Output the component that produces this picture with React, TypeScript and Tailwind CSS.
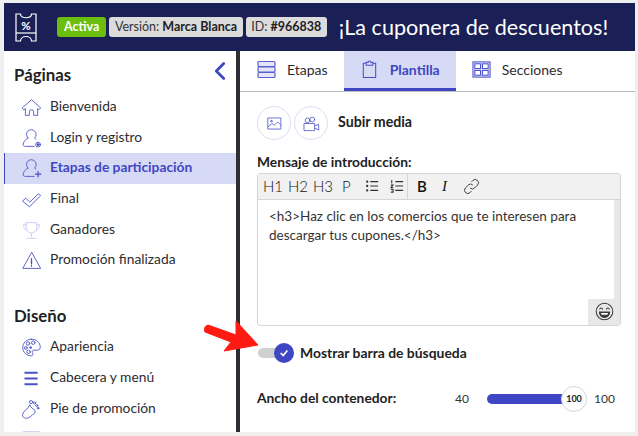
import { ChevronLeft } from 'lucide-react';

const FONT = "font-['Lato','Noto_Sans',sans-serif]";

function Icon({ children, className = '' }: { children: React.ReactNode; className?: string }) {
  return (
    <svg viewBox="0 0 24 24" fill="none" stroke="#4a50c8" strokeWidth="1" strokeLinecap="round" strokeLinejoin="round" className={className}>
      {children}
    </svg>
  );
}

const paginas = [
  {
    label: 'Bienvenida',
    icon: <path d="M1.500 12.500 12 3l10.500 9.500-2 2-1.500-1.300V21h-4.500v-4a2.500 2.500 0 0 0-5 0v4H5v-7.800l-1.500 1.300z" />,
  },
  {
    label: 'Login y registro',
    icon: (
      <>
        <path d="M8 11.500a5.500 5.500 0 1 1 7.500 0c.5.500 1 .8 1.500 1M8 11.500C5 13 2.500 16 2.500 19c0 1.500 1 2 2.500 2h10" />
        <circle cx="19.500" cy="19" r="2.800" />
        <circle cx="19.500" cy="19" r="1.200" fill="#4a50c8" />
      </>
    ),
  },
  {
    label: 'Etapas de participación',
    active: true,
    icon: (
      <>
        <path d="M8 11.500a5.500 5.500 0 1 1 7.500 0c.5.500 1 .8 1.500 1M8 11.500C5 13 2.500 16 2.500 19c0 1.500 1 2 2.500 2h10" />
        <path d="M19.500 15.500v6M16.500 18.500h6" strokeWidth="1.500" />
      </>
    ),
  },
  {
    label: 'Final',
    icon: <path d="m2 13.500 3.500-3 4.500 4.500 10-9.500 2.500 2L10 20z" />,
  },
  {
    label: 'Ganadores',
    faded: true,
    icon: (
      <>
        <path d="M6 3h12v6a6 6 0 0 1-12 0z" />
        <path d="M6 5H3c0 4 1 6 4 7M18 5h3c0 4-1 6-4 7M12 15v4M7 21h10" />
      </>
    ),
  },
  {
    label: 'Promoción finalizada',
    icon: (
      <>
        <path d="M12 3 2 21h20z" />
        <path d="M12 10v6M12 18v.5" strokeWidth="1.500" />
      </>
    ),
  },
];

const diseno = [
  {
    label: 'Apariencia',
    icon: (
      <>
        <path d="M12 2.500C6 2.500 2 7 2 12c0 5.500 4.500 9.500 9 9.500 3 0 3-2 2-3.500-.8-1.500 0-3 2-3h4c2 0 3-1.500 3-3.500 0-5-4.500-9-10-9z" />
        <circle cx="8" cy="7.500" r="2" />
        <circle cx="14" cy="6.500" r="2" />
        <circle cx="5.500" cy="12.500" r="1.600" />
        <circle cx="8.500" cy="17" r="2" />
        <circle cx="11" cy="12" r="1" fill="#4a50c8" />
      </>
    ),
  },
  {
    label: 'Cabecera y menú',
    icon: <path d="M4 5.500h15M4 12h15M4 18.500h15" strokeWidth="2.200" strokeLinecap="butt" />,
  },
  {
    label: 'Pie de promoción',
    icon: (
      <>
        <path d="M10 7c1 3 4 4 6 6 1 3-1 4-3 5-2 2-4 4-7 4-3 0-5-2-4-5 1-4 6-5 8-10z" />
        <circle cx="11.500" cy="3.500" r="1.800" />
        <circle cx="15.500" cy="4.500" r="1.300" />
        <circle cx="18" cy="7.500" r="1.200" />
        <circle cx="19.500" cy="10.500" r="1" />
      </>
    ),
  },
  {
    label: '',
    faded: true,
    icon: <rect x="3" y="3" width="18" height="18" />,
  },
];

function NavRow({ label, icon, active, faded }: { label: string; icon: React.ReactNode; active?: boolean; faded?: boolean }) {
  return (
    <div className={`flex h-[30.700px] items-center border-l-[1px] pl-[16px] ${active ? 'border-[#3f46c4] bg-[#d6daf5]' : 'border-transparent'}`}>
      <Icon className={`h-[21px] w-[21px] ${faded ? 'opacity-30' : ''}`}>{icon}</Icon>
      <span className={`-mt-[2px] ml-[8px] text-[13.800px] ${active ? 'font-bold text-[#3f46c4]' : 'text-[#2c2c30]'}`}>{label}</span>
    </div>
  );
}

function Tab({ label, icon, active }: { label: string; icon: React.ReactNode; active?: boolean }) {
  return (
    <div className={`flex h-[40px] items-center gap-[11px] border-b-[3px] px-[16px] text-[14px] ${active ? 'border-[#3f46c4] bg-[#d6daf5] font-bold text-[#3f46c4]' : 'border-transparent text-[#2c2c30]'}`}>
      {icon}
      <span>{label}</span>
    </div>
  );
}

function MediaButton({ children }: { children: React.ReactNode }) {
  return (
    <div className="flex h-[34px] w-[34px] items-center justify-center rounded-full border border-[#dcdef2]">
      <Icon className="h-[19px] w-[19px]">{children}</Icon>
    </div>
  );
}

function Tool({ children, className = '' }: { children: React.ReactNode; className?: string }) {
  return <span className={`text-[15px] leading-none whitespace-nowrap text-[#111] ${className}`}>{children}</span>;
}

export default function App() {
  return (
    <div className={`${FONT} relative h-[436px] w-[638px] overflow-hidden bg-[#efefef] pb-[4px] pl-[4px] pr-[3px] pt-[3px]`}>
      <div className="flex h-full flex-col">
        <header className="flex h-[48px] shrink-0 items-center bg-[#1a1f55]">
          <svg viewBox="0 0 22 29" fill="none" stroke="white" strokeWidth="1.200" className="ml-[11px] h-[29px] w-[22px]">
            <path d="M1 1h4.500c0 5 11 5 11 0H21v27h-4.500c0-6-11-6-11 0H1z" />
            <path d="M1 20h20" />
            <text x="11" y="16.500" fontSize="11.500" fontWeight="700" fill="white" stroke="none" textAnchor="middle">%</text>
          </svg>
          <span className="ml-[20px] flex h-[20px] items-center rounded-[3px] bg-[#6cbd0c] px-[7px] text-[12.500px] font-bold text-white">Activa</span>
          <span className="ml-[3px] flex h-[20px] items-center rounded-[3px] bg-[#dcdcdc] px-[5.500px] text-[12.500px] text-[#333]">
            Versión:&nbsp;<b className="text-[#222]">Marca Blanca</b>
          </span>
          <span className="ml-[3px] flex h-[20px] items-center rounded-[3px] bg-[#dcdcdc] px-[5.500px] text-[12.500px] text-[#333]">
            ID:&nbsp;<b className="text-[#222]">#966838</b>
          </span>
          <span className="ml-[12px] text-[21.600px] text-white">¡La cuponera de descuentos!</span>
        </header>

        <div className="flex min-h-0 flex-1">
          <aside className="w-[232px] shrink-0 overflow-hidden bg-white">
            <div className="flex h-[41px] items-center justify-between pl-[10px] pr-[1px] pt-[7px]">
              <h2 className="text-[16.800px] font-bold text-[#1f1f24]">Páginas</h2>
              <ChevronLeft className="-mt-[8px] h-[30px] w-[30px] text-[#3f46c4]" strokeWidth={2.200} />
            </div>
            <nav>
              {paginas.map((p) => (
                <NavRow key={p.label} {...p} />
              ))}
            </nav>
            <h2 className="mb-[4px] mt-[27px] pl-[10px] text-[16.800px] font-bold text-[#1f1f24]">Diseño</h2>
            <nav>
              {diseno.map((p) => (
                <NavRow key={p.label} {...p} />
              ))}
            </nav>
          </aside>
          <div className="w-[4px] shrink-0 bg-[#2e2e34]" />

          <main className="min-w-0 flex-1 bg-white">
            <div className="flex border-b border-[#bdbdbd] pl-[1px]">
              <Tab
                label="Etapas"
                icon={
                  <svg viewBox="0 0 19 19" fill="#e4e6f8" stroke="#5a60cc" strokeWidth="1.200" className="h-[19px] w-[19px]">
                    <rect x="1" y="1.500" width="17" height="5" rx="1" />
                    <rect x="1" y="7" width="17" height="5" rx="1" />
                    <rect x="1" y="12.500" width="17" height="5" rx="1" />
                  </svg>
                }
              />
              <Tab
                active
                label="Plantilla"
                icon={
                  <svg viewBox="0 0 20 20" fill="none" stroke="#4a50c8" strokeWidth="1.100" className="h-[19px] w-[19px]">
                    <path d="M6.500 3.500h-3v15h13v-15h-3M6.500 5.500v-3h2a1.500 1.500 0 0 1 3 0h2v3z" />
                  </svg>
                }
              />
              <Tab
                label="Secciones"
                icon={
                  <svg viewBox="0 0 20 20" fill="#e4e6f8" stroke="#4a50c8" strokeWidth="1.100" className="h-[19px] w-[19px]">
                    <rect x="1" y="2" width="18" height="16" />
                    <rect x="3" y="4" width="6" height="5" fill="white" />
                    <rect x="11" y="4" width="6" height="5" fill="white" />
                    <rect x="3" y="11" width="6" height="5" fill="white" />
                    <rect x="11" y="11" width="6" height="5" fill="white" />
                  </svg>
                }
              />
            </div>

            <div className="pl-[17px] pr-[14px] pt-[14px]">
              <div className="flex items-center gap-[3px]">
                <MediaButton>
                  <rect x="4" y="5" width="16" height="14" />
                  <path d="m4 16 5-4 3 2 4-4 4 4" />
                  <circle cx="8" cy="9" r="1" />
                </MediaButton>
                <MediaButton>
                  <rect x="3" y="12" width="13" height="9" />
                  <circle cx="7" cy="8" r="3" />
                  <circle cx="13" cy="7" r="3" />
                  <path d="m16 15 5-2v7l-5-2" />
                </MediaButton>
                <span className="-mt-[2px] ml-[7px] text-[14.200px] font-bold text-[#222]">Subir media</span>
              </div>

              <p className="mt-[12px] text-[13.800px] font-bold text-[#222]">Mensaje de introducción:</p>

              <div className="h-[153px] rounded-[3px] border border-[#d5d5d5]">
                <div className="flex h-[26px] items-center border-b border-[#d5d5d5] bg-[#f1f1f1]">
                  <div className="flex h-full w-[150px] items-center gap-[9px] border-r border-[#d5d5d5] pl-[5px]">
                    <Tool className="w-[16px] font-light">H1</Tool>
                    <Tool className="w-[16px] font-light">H2</Tool>
                    <Tool className="w-[16px] font-light">H3</Tool>
                    <Tool className="ml-[4px] w-[8px] font-light">P</Tool>
                    <svg viewBox="0 0 16 16" stroke="#333" strokeWidth="1.200" className="ml-[6px] h-[14px] w-[14px]">
                      <path d="M6 3h9M6 8h9M6 13h9" />
                      <circle cx="2.500" cy="3" r="1.300" fill="#333" stroke="none" />
                      <circle cx="2.500" cy="8" r="1.300" fill="#333" stroke="none" />
                      <circle cx="2.500" cy="13" r="1.300" fill="#333" stroke="none" />
                    </svg>
                    <svg viewBox="0 0 16 16" stroke="#333" strokeWidth="1.200" fill="none" className="ml-[2px] h-[14px] w-[14px]">
                      <path d="M6 3h9M6 8h9M6 13h9M2 1v4M1 7h2.500L1 10h3M1 12h2.500v3H1" />
                    </svg>
                  </div>
                  <Tool className="ml-[9px] w-[8px] font-semibold">B</Tool>
                  <Tool className="ml-[17px] w-[6px] font-['Liberation_Serif',serif] italic">I</Tool>
                  <svg viewBox="0 0 24 24" fill="none" stroke="#333" strokeWidth="1.300" className="ml-[15px] h-[17px] w-[17px]">
                    <path d="M10 14a4.500 4.500 0 0 0 6.500 0l4-4a4.500 4.500 0 0 0-6.500-6.500l-2 2" />
                    <path d="M14 10a4.500 4.500 0 0 0-6.500 0l-4 4a4.500 4.500 0 0 0 6.500 6.500l2-2" />
                  </svg>
                </div>
                <div className="relative h-[125px] pl-[11px] pr-[12px] pt-[7px] text-[13.500px] leading-[19px] text-[#333]">
                  <p>&lt;h3&gt;Haz clic en los comercios que te interesen para descargar tus cupones.&lt;/h3&gt;</p>
                  <div className="absolute bottom-[26px] right-0 top-0 w-[6px] bg-[#e8e8e8]" />
                  <div className="absolute bottom-0 right-0 flex h-[26px] w-[32px] items-center justify-center bg-[#e8e8e8]">
                    <svg viewBox="0 0 24 24" fill="none" stroke="#3a3a3a" strokeWidth="1.300" strokeLinecap="round" className="h-[19px] w-[19px]">
                      <circle cx="12" cy="12" r="10.500" />
                      <path d="M5.500 12.500h13c0 4-3 7-6.500 7s-6.500-3-6.500-7z" fill="#3a3a3a" />
                      <path d="M7.500 14h9c-.2 1-.5 1.500-1 2h-7c-.5-.5-.8-1-1-2z" fill="white" stroke="none" />
                      <path d="M6 9c.5-2 3-2 3.500 0M14.500 9c.5-2 3-2 3.500 0" />
                    </svg>
                  </div>
                </div>
              </div>

              <div className="mt-[17px] flex items-center">
                <div className="relative h-[20px] w-[37px]">
                  <div className="absolute left-[1px] top-[5px] h-[10px] w-[26px] rounded-full bg-[#d0d0d0]" />
                  <div className="absolute left-[17px] top-0 flex h-[20px] w-[20px] items-center justify-center rounded-full bg-[#3f46c4]">
                    <svg viewBox="0 0 12 12" fill="none" stroke="white" strokeWidth="2" className="h-[10px] w-[10px]">
                      <path d="m2 6 3 3 5-6" />
                    </svg>
                  </div>
                </div>
                <span className="ml-[6px] text-[13.900px] font-bold text-[#222]">Mostrar barra de búsqueda</span>
              </div>

              <div className="mt-[22px] flex items-center">
                <span className="w-[198px] text-[13.800px] font-bold text-[#222]">Ancho del contenedor:</span>
                <span className="w-[12px] text-[12px] text-[#333]">40</span>
                <div className="ml-[20px] flex h-[26px] w-[99px] items-center">
                  <div className="h-[10px] w-[78px] shrink-0 rounded-l-full bg-[#3f46c4]" />
                  <div className="-ml-[4px] flex h-[26px] w-[26px] shrink-0 items-center justify-center rounded-full border border-[#d5d5d5] bg-white text-[9px] font-bold text-[#222]">100</div>
                </div>
                <span className="ml-[8px] text-[12px] text-[#333]">100</span>
              </div>
            </div>
          </main>
        </div>
      </div>

      <svg viewBox="0 0 60 36" className="absolute left-[200px] top-[318px] h-[36px] w-[60px]">
        <path d="M8 7 36 17 36 3 58 27 24 33 31 24 5 14Q3 9 8 7z" fill="#ff1a12" stroke="#ff1a12" strokeLinejoin="round" />
      </svg>
    </div>
  );
}
